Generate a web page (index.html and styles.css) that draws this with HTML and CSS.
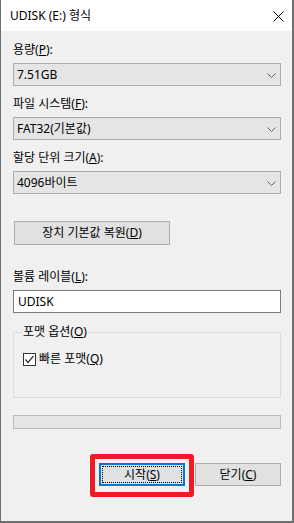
FILE: index.html
```html
<!DOCTYPE html>
<html lang="ko">
<head>
    <meta charset="UTF-8">
    <meta name="viewport" content="width=device-width, initial-scale=1.0">
    <title>UDISK (E:) 형식</title>
    <link rel="stylesheet" href="styles.css">
</head>
<body>
    <div class="window">
        <!-- 제목 표시줄 -->
        <div class="titlebar">
            <span class="title">UDISK (E:) 형식</span>
            <svg class="close" width="11" height="11" viewBox="0 0 11 11">
                <line x1="0.5" y1="0.5" x2="10.5" y2="10.5" stroke="#000" stroke-width="1"/>
                <line x1="10.5" y1="0.5" x2="0.5" y2="10.5" stroke="#000" stroke-width="1"/>
            </svg>
        </div>

        <div class="content">
            <label class="field-label">용량(<u>P</u>):</label>
            <div class="combo">
                <span>7.51GB</span>
                <svg class="chevron" width="9" height="5" viewBox="0 0 9 5"><polyline points="0.5,0.5 4.5,4.5 8.5,0.5" fill="none" stroke="#606060" stroke-width="1"/></svg>
            </div>

            <label class="field-label">파일 시스템(<u>F</u>):</label>
            <div class="combo">
                <span>FAT32(기본값)</span>
                <svg class="chevron" width="9" height="5" viewBox="0 0 9 5"><polyline points="0.5,0.5 4.5,4.5 8.5,0.5" fill="none" stroke="#606060" stroke-width="1"/></svg>
            </div>

            <label class="field-label">할당 단위 크기(<u>A</u>):</label>
            <div class="combo">
                <span>4096바이트</span>
                <svg class="chevron" width="9" height="5" viewBox="0 0 9 5"><polyline points="0.5,0.5 4.5,4.5 8.5,0.5" fill="none" stroke="#606060" stroke-width="1"/></svg>
            </div>

            <button class="btn btn-restore">장치 기본값 복원(<u>D</u>)</button>

            <label class="field-label label-volume">볼륨 레이블(<u>L</u>):</label>
            <div class="textbox">UDISK</div>

            <fieldset class="group">
                <legend>포맷 옵션(<u>O</u>)</legend>
                <div class="check-row">
                    <span class="checkbox">
                        <svg width="11" height="11" viewBox="0 0 11 11"><polyline points="1.5,5.5 4,8.5 9.5,2" fill="none" stroke="#333" stroke-width="1.2"/></svg>
                    </span>
                    <span>빠른 포맷(<u>Q</u>)</span>
                </div>
            </fieldset>

            <div class="progress"></div>

            <div class="actions">
                <button class="btn btn-start">시작(<u>S</u>)<span class="highlight"></span></button>
                <button class="btn">닫기(<u>C</u>)</button>
            </div>
        </div>
    </div>
</body>
</html>
```

FILE: styles.css
```css
:root {
    --dialog-bg: #f0f0f0;
    --frame: #707070;
    --control-bg: #e5e5e5;
    --control-border: #adadad;
    --focus-blue: #0078d7;
    --mark-red: #ed1c24;
}

* {
    box-sizing: border-box;
}

body {
    margin: 0;
    font-family: "Noto Sans", "Noto Sans CJK KR", sans-serif;
    font-size: 12px;
    line-height: 16px;
    color: #000;
}

u {
    text-underline-offset: 1px;
}

.window {
    width: 294px;
    height: 523px;
    background: var(--dialog-bg);
    border-left: 1px solid var(--frame);
    border-right: 2px solid var(--frame);
    border-bottom: 2px solid var(--frame);
    display: flex;
    flex-direction: column;
}

/* 제목 표시줄 */
.titlebar {
    height: 31px;
    background: #fff;
    display: flex;
    align-items: center;
    justify-content: space-between;
    padding: 0 8px 0 9px;
}

.close {
    display: block;
    margin-top: 1px;
}

.content {
    padding: 11px 11px 0 12px;
    display: flex;
    flex-direction: column;
}

.field-label {
    display: block;
    height: 16px;
    margin-bottom: 5px;
}

.combo {
    height: 23px;
    background: var(--control-bg);
    border: 1px solid var(--control-border);
    display: flex;
    align-items: center;
    justify-content: space-between;
    padding: 0 4px 0 3px;
    margin-bottom: 10px;
}

.chevron {
    display: block;
    margin-top: 1px;
}

.btn {
    font: inherit;
    color: #000;
    height: 23px;
    padding: 0;
    background: #e1e1e1;
    border: 1px solid var(--control-border);
    border-radius: 0;
    width: 86px;
}

.btn-restore {
    width: 156px;
    height: 24px;
    margin: 17px 0 0 1px;
}

.label-volume {
    margin-top: 24px;
}

.textbox {
    height: 23px;
    background: #fff;
    border: 1px solid #7a7a7a;
    padding: 0 4px;
    display: flex;
    align-items: center;
}

/* 포맷 옵션 그룹 */
.group {
    margin: 11px 0 0;
    border: 1px solid #dcdcdc;
    padding: 11px 8px 30px;
    min-width: 0;
}

.group legend {
    padding: 0 1px;
    line-height: 16px;
}

.check-row {
    display: flex;
    align-items: center;
    gap: 3px;
    height: 16px;
    margin-left: 1px;
}

.checkbox {
    width: 13px;
    height: 13px;
    border: 1px solid #333;
    background: #fff;
    display: flex;
    align-items: center;
    justify-content: center;
}

.checkbox svg {
    display: block;
}

.progress {
    height: 14px;
    margin-top: 17px;
    background: #e6e6e6;
    border: 1px solid #bcbcbc;
}

.actions {
    display: flex;
    justify-content: flex-end;
    gap: 10px;
    margin-top: 34px;
}

.btn-start {
    position: relative;
    border: 2px solid var(--focus-blue);
}

.btn-start::after {
    content: "";
    position: absolute;
    inset: 1px;
    border: 1px dotted #000;
}

/* 강조 표시 */
.highlight {
    position: absolute;
    left: -11px;
    right: -11px;
    top: -11px;
    bottom: -13px;
    border: 5px solid var(--mark-red);
    border-radius: 3px;
}
```
